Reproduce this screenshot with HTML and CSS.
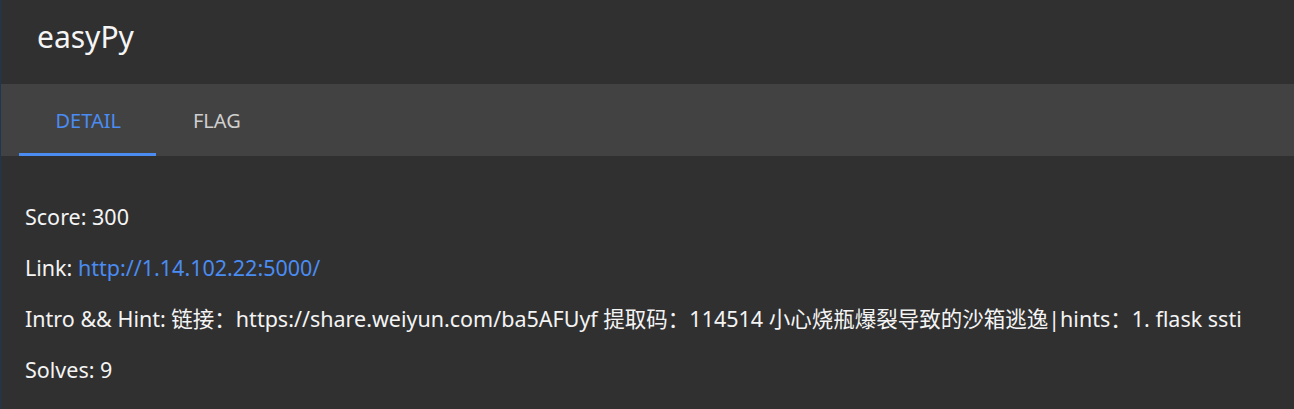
FILE: index.html
```html
<!DOCTYPE html>
<html>
<head>
<meta charset="utf-8">
<link rel="stylesheet" href="styles.css">
</head>
<body>
<div class="page">
  <header class="header"><h1 class="title">easyPy</h1></header>
  <nav class="tabs">
    <div class="tab active">DETAIL</div>
    <div class="tab">FLAG</div>
  </nav>
  <main class="content">
    <p class="row">Score: 300</p>
    <p class="row">Link: <a class="link" href="#">http://1.14.102.22:5000/</a></p>
    <p class="row">Intro &amp;&amp; Hint: 链接：https://share.weiyun.com/ba5AFUyf 提取码：114514 小心烧瓶爆裂导致的沙箱逃逸|hints：1. flask ssti</p>
    <p class="row">Solves: 9</p>
  </main>
</div>
</body>
</html>
```
FILE: styles.css
```css
* { box-sizing: border-box; }
html, body { margin: 0; padding: 0; background: #303030; }
body {
  font-family: "Noto Sans", "Noto Sans CJK SC", sans-serif;
  color: #ffffff;
  width: 1294px;
  height: 409px;
  overflow: hidden;
}
.page {
  border-left: 1px solid #1d3557;
  height: 409px;
}
.header {
  height: 84px;
  background: #303030;
  padding: 16px 0 0 36px;
}
.title {
  margin: 0;
  font-size: 30px;
  line-height: 41px;
  font-weight: 400;
  color: #f5f5f5;
}
.tabs {
  height: 72px;
  background: #424242;
  display: flex;
  padding-left: 18px;
}
.tab {
  padding: 3px 35.5px 0 36.5px;
  display: flex;
  align-items: center;
  font-size: 20px;
  color: #cfcfcf;
  border-bottom: 3px solid transparent;
}
.tab.active {
  color: #4a8cf2;
  border-bottom-color: #4a8cf2;
}
.content {
  padding: 35px 24px 0;
  display: flex;
  flex-direction: column;
}
.row {
  margin: 0;
  height: 51px;
  line-height: 51px;
  font-size: 21.5px;
  color: #f4f4f4;
  white-space: nowrap;
}
.link { color: #4a8cf2; text-decoration: none; }
```
